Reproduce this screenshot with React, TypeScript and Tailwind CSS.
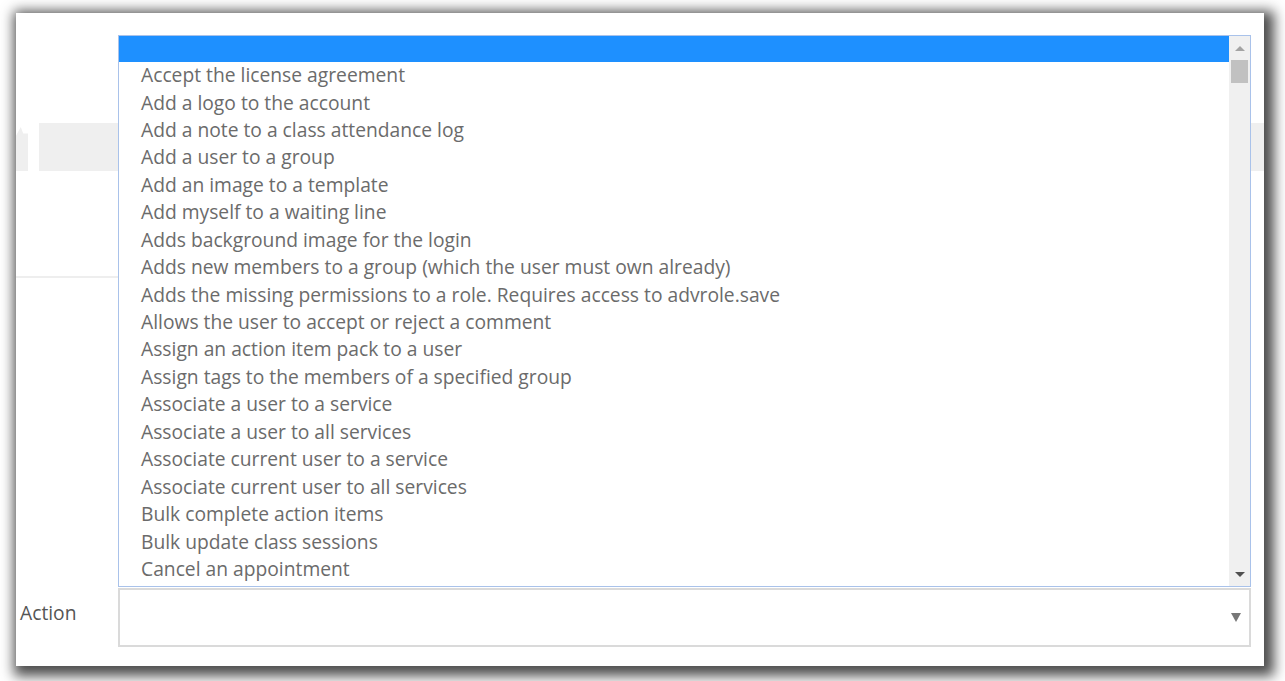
const actions = [
  'Accept the license agreement',
  'Add a logo to the account',
  'Add a note to a class attendance log',
  'Add a user to a group',
  'Add an image to a template',
  'Add myself to a waiting line',
  'Adds background image for the login',
  'Adds new members to a group (which the user must own already)',
  'Adds the missing permissions to a role. Requires access to advrole.save',
  'Allows the user to accept or reject a comment',
  'Assign an action item pack to a user',
  'Assign tags to the members of a specified group',
  'Associate a user to a service',
  'Associate a user to all services',
  'Associate current user to a service',
  'Associate current user to all services',
  'Bulk complete action items',
  'Bulk update class sessions',
  'Cancel an appointment',
];

const ActionList = () =>
{
  return (
    <div className="absolute left-[102px] top-[22px] w-[1133px] h-[552px] bg-white border border-[#a9c2ea] flex overflow-hidden">
      <div className="flex-1 flex flex-col overflow-hidden">
        <div className="h-[26px] shrink-0 bg-[#1e90ff]"></div>
        {
          actions.map((a) => (
            <div key={a} className="h-[27.45px] shrink-0 flex items-center pl-[22px] pb-[2px] text-[19.25px] leading-none text-[#6b6b6b] whitespace-nowrap">
              {a}
            </div>
          ))
        }
      </div>
      {/* scrollbar */}
      <div className="w-[21px] shrink-0 bg-[#f0f0f0] flex flex-col items-center">
        <div className="h-[24px] w-full flex items-center justify-center">
          <div className="w-0 h-0 border-l-[5px] border-r-[5px] border-b-[5px] border-l-transparent border-r-transparent border-b-[#a3a3a3]"></div>
        </div>
        <div className="w-[17px] h-[23px] bg-[#c1c1c1]"></div>
        <div className="flex-1"></div>
        <div className="h-[24px] w-full flex items-center justify-center">
          <div className="w-0 h-0 border-l-[5px] border-r-[5px] border-t-[5px] border-l-transparent border-r-transparent border-t-[#505050]"></div>
        </div>
      </div>
    </div>
  );
}

const App = () =>
{
  return (
    <div className="w-[1285px] h-[681px] bg-white overflow-hidden pl-[16px] pt-[13px]" style={{ fontFamily: '"Open Sans", "Liberation Sans", sans-serif' }}>
      <div className="relative w-[1248px] h-[653px] bg-white shadow-[4px_4px_12px_6px_rgba(0,0,0,0.7)] flex flex-col">
        {/* page content behind the open list */}
        <div className="h-[110px] shrink-0"></div>
        <div className="h-[48px] shrink-0 flex gap-[11px]">
          <div className="w-[12px] mt-[4px] bg-[#efefef] [clip-path:polygon(0_20%,40%_0,60%_15%,100%_15%,100%_100%,0_100%)]"></div>
          <div className="flex-1 bg-[#efefef]"></div>
        </div>
        <div className="h-[105px] shrink-0"></div>
        <div className="h-[2px] w-[102px] shrink-0 bg-[#eeeeee]"></div>
        <div className="h-[310px] shrink-0"></div>

        <div className="flex items-center h-[59px] shrink-0">
          <div className="w-[102px] pl-[4px] pb-[8px] text-[19.25px] text-[#555555]">Action</div>
          <div className="w-[1133px] h-[59px] border-2 border-[#dadada] flex items-center justify-end pr-[8px]">
            <div className="w-0 h-0 border-l-[5px] border-r-[5px] border-t-[9px] border-l-transparent border-r-transparent border-t-[#777777]"></div>
          </div>
        </div>

        <ActionList />
      </div>
    </div>
  );
}

export default App;
